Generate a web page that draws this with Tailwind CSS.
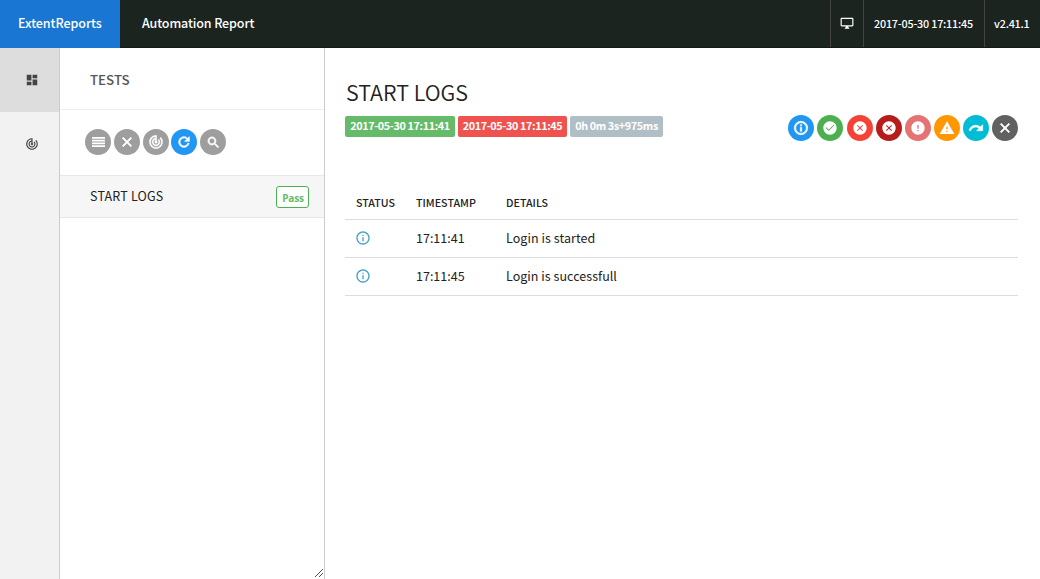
<!DOCTYPE html>
<html lang="en">
<head>
<meta charset="utf-8">
<title>Automation Report</title>
<script src="https://cdn.jsdelivr.net/npm/@tailwindcss/browser@4"></script>
</head>
<body class="h-screen overflow-hidden bg-white text-[#222] font-['Noto_Sans_CJK_SC','Noto_Sans',sans-serif]">
<svg class="hidden">
  <symbol id="track" viewBox="0 0 24 24"><path d="M19.07 4.93l-1.41 1.41C19.1 7.79 20 9.79 20 12c0 4.42-3.58 8-8 8s-8-3.58-8-8c0-4.08 3.05-7.44 7-7.93v2.02C8.16 6.57 6 9.03 6 12c0 3.31 2.69 6 6 6s6-2.69 6-6c0-1.66-.67-3.16-1.76-4.24l-1.41 1.41C15.55 9.9 16 10.9 16 12c0 2.21-1.79 4-4 4s-4-1.79-4-4c0-1.86 1.28-3.41 3-3.86v2.14c-.6.35-1 .98-1 1.72 0 1.1.9 2 2 2s2-.9 2-2c0-.74-.4-1.38-1-1.72V2h-1C6.48 2 2 6.48 2 12s4.48 10 10 10 10-4.48 10-10c0-2.76-1.12-5.26-2.93-7.07z"/></symbol>
  <symbol id="close" viewBox="0 0 24 24"><path d="M19 6.41L17.59 5 12 10.59 6.41 5 5 6.41 10.59 12 5 17.59 6.41 19 12 13.41 17.59 19 19 17.59 13.41 12z"/></symbol>
  <symbol id="info" viewBox="0 0 24 24"><path d="M11 17h2v-6h-2v6zm1-15C6.48 2 2 6.48 2 12s4.48 10 10 10 10-4.48 10-10S17.52 2 12 2zm0 18c-4.41 0-8-3.59-8-8s3.59-8 8-8 8 3.59 8 8-3.59 8-8 8zM11 9h2V7h-2v2z"/></symbol>
  <symbol id="cancel" viewBox="0 0 24 24"><path d="M12 2C6.47 2 2 6.47 2 12s4.47 10 10 10 10-4.47 10-10S17.53 2 12 2zm4.5 13.5l-1 1L12 13l-3.500 3.500-1-1L11 12 7.500 8.500l1-1L12 11l3.500-3.500 1 1L13 12z"/></symbol>
</svg>
<div class="flex h-full flex-col">
  <header class="flex h-12 shrink-0 border-b border-[#151a17] bg-[#1c2420] text-white">
    <div class="-mb-px flex w-[120px] items-center bg-[#1976d2] pb-px pl-[18px] text-[12.5px] font-medium leading-none tracking-[-0.05px]">ExtentReports</div>
    <div class="flex flex-1 items-center pl-[22px] text-[12.5px] font-medium leading-none tracking-[-0.12px]">Automation Report</div>
    <div class="flex w-[33px] items-center justify-center border-l border-[#444] pb-px">
      <svg class="size-[14px] fill-white" viewBox="0 0 24 24"><path d="M21 3H3c-1.1 0-2 .9-2 2v11c0 1.1.9 2 2 2h7v1l-2 2v1h8v-1l-2-2v-1h7c1.1 0 2-.9 2-2V5c0-1.1-.9-2-2-2zm0 13H3V5h18v11z"/></svg>
    </div>
    <div class="flex w-[121px] items-center border-l border-[#444] pb-px pl-[10px] text-[10.8px] font-medium leading-none tracking-[-0.2px]">2017-05-30 17:11:45</div>
    <div class="flex w-[56px] items-center border-l border-[#444] pb-px pl-[9px] text-[10.8px] font-medium leading-none tracking-[-0.2px]">v2.41.1</div>
  </header>
  <div class="flex min-h-0 flex-1">
    <nav class="w-[60px] shrink-0 border-r border-[#ccc] bg-[#f2f2f2]">
      <div class="flex h-16 items-center justify-center bg-[#ddd] pl-[4px] pb-px"><svg class="size-[14px] fill-[#444]" viewBox="0 0 24 24"><path d="M3 13h8V3H3v10zm0 8h8v-6H3v6zm10 0h8V11h-8v10zm0-18v6h8V3h-8z"/></svg></div>
      <div class="flex h-16 items-center justify-center pl-[4px]"><svg class="size-[14px] fill-[#444]"><use href="#track"/></svg></div>
    </nav>
    <aside class="relative w-[265px] shrink-0 border-r border-[#ccc]">
      <div class="flex h-[62px] items-center border-b border-[#eee] pl-[30px] pt-[3px] text-[13.3px] font-medium text-[#555] leading-none">TESTS</div>
      <div class="flex h-[65px] items-center gap-[2.8px] pb-px pl-[25px]">
        <div class="flex size-[26px] items-center justify-center rounded-full bg-[#9e9e9e]"><svg class="h-[10px] w-[13px] fill-white" viewBox="0 0 13 10"><path d="M0 0h13v1.700H0zM0 2.800h13v1.700H0zM0 5.600h13v1.700H0zM0 8.300h13V10H0z"/></svg></div>
        <div class="flex size-[26px] items-center justify-center rounded-full bg-[#9e9e9e]"><svg class="size-[16px] fill-white stroke-white"><use href="#close"/></svg></div>
        <div class="flex size-[26px] items-center justify-center rounded-full bg-[#9e9e9e]"><svg class="size-[16px] fill-white stroke-white stroke-[.5]"><use href="#track"/></svg></div>
        <div class="flex size-[26px] items-center justify-center rounded-full bg-[#2196f3]"><svg class="size-[16px] fill-white stroke-white" viewBox="0 0 24 24"><path d="M17.65 6.35C16.2 4.9 14.21 4 12 4c-4.42 0-7.99 3.58-7.99 8s3.57 8 7.99 8c3.73 0 6.84-2.55 7.73-6h-2.08c-.82 2.33-3.04 4-5.65 4-3.31 0-6-2.69-6-6s2.69-6 6-6c1.66 0 3.14.69 4.22 1.78L13 11h7V4l-2.35 2.35z"/></svg></div>
        <div class="flex size-[26px] items-center justify-center rounded-full bg-[#9e9e9e]"><svg class="size-[15px] fill-white stroke-white" viewBox="0 0 24 24"><path d="M15.5 14h-.79l-.28-.27C15.41 12.59 16 11.11 16 9.5 16 5.91 13.09 3 9.5 3S3 5.91 3 9.5 5.91 16 9.5 16c1.61 0 3.09-.59 4.23-1.57l.27.28v.79l5 4.99L20.49 19l-4.99-5zm-6 0C7.01 14 5 11.99 5 9.5S7.01 5 9.5 5 14 7.01 14 9.5 11.99 14 9.5 14z"/></svg></div>
      </div>
      <div class="flex h-[43px] items-center justify-between border-y border-[#e8e8e8] bg-[#f6f6f6] pl-[30px] pr-[15px]">
        <span class="text-[12.5px] leading-none tracking-[0.2px]">START LOGS</span>
        <span class="flex h-[22px] w-[33px] items-center justify-center rounded-[3px] border border-[#4caf50] bg-white pl-px pt-[2px] font-['Open_Sans',sans-serif] text-[10px] font-bold leading-none text-[#66bb6a] tracking-[-0.2px]">Pass</span>
      </div>
      <svg class="absolute bottom-[2px] right-[1px] size-[8px] stroke-[#555]" viewBox="0 0 8 8"><path d="M0 8L8 0M4 8L8 4"/></svg>
    </aside>
    <main class="flex-1 pl-5 pr-[22px]">
      <h1 class="mt-[29px] h-[30px] pl-px text-[21.5px] font-[350] leading-[30px]">START LOGS</h1>
      <div class="mt-[8px] flex h-[26px] justify-between">
        <div class="mt-px flex h-[21px] gap-[3px] text-[10.8px] font-bold leading-[19px] tracking-[-0.37px] text-white">
          <span class="w-[110px] rounded-[2px] bg-[#66bb6a] text-center">2017-05-30 17:11:41</span>
          <span class="w-[109px] rounded-[2px] bg-[#ef5350] text-center">2017-05-30 17:11:45</span>
          <span class="w-[93px] rounded-[2px] bg-[#b0bec5] text-center">0h 0m 3s+975ms</span>
        </div>
        <div class="flex gap-[3.1px]">
          <div class="flex size-[26px] items-center justify-center rounded-full bg-[#2196f3]"><svg class="size-[16px] fill-white stroke-white"><use href="#info"/></svg></div>
          <div class="flex size-[26px] items-center justify-center rounded-full bg-[#4caf50]"><svg class="size-[16px] fill-white" viewBox="0 0 24 24"><path d="M12 2C6.48 2 2 6.48 2 12s4.48 10 10 10 10-4.48 10-10S17.52 2 12 2zm-2 14.500l-4.500-4.500 1-1L10 14.500l7.500-7.500 1 1z"/></svg></div>
          <div class="flex size-[26px] items-center justify-center rounded-full bg-[#f44336]"><svg class="size-[16px] fill-white"><use href="#cancel"/></svg></div>
          <div class="flex size-[26px] items-center justify-center rounded-full bg-[#b71c1c]"><svg class="size-[16px] fill-white"><use href="#cancel"/></svg></div>
          <div class="flex size-[26px] items-center justify-center rounded-full bg-[#e57373]"><svg class="size-[16px] fill-white" viewBox="0 0 24 24"><path d="M12 2C6.48 2 2 6.48 2 12s4.48 10 10 10 10-4.48 10-10S17.52 2 12 2zm1 15h-2v-2h2v2zm0-4h-2V7h2v6z"/></svg></div>
          <div class="flex size-[26px] items-center justify-center rounded-full bg-[#ff9800]"><svg class="size-[16px] fill-white" viewBox="0 0 24 24"><path d="M1 21h22L12 2 1 21zm12-3h-2v-2h2v2zm0-4h-2v-4h2v4z"/></svg></div>
          <div class="flex size-[26px] items-center justify-center rounded-full bg-[#00bcd4]"><svg class="size-[16px] fill-white stroke-white" viewBox="0 0 24 24"><path d="M18.4 10.6C16.55 8.99 14.15 8 11.5 8c-4.65 0-8.58 3.03-9.96 7.22L3.9 16c1.05-3.19 4.05-5.5 7.6-5.5 1.95 0 3.73.72 5.12 1.88L13 16h9V7l-3.6 3.6z"/></svg></div>
          <div class="flex size-[26px] items-center justify-center rounded-full bg-[#616161]"><svg class="size-[16px] fill-white stroke-white"><use href="#close"/></svg></div>
        </div>
      </div>
      <div class="mt-[46px] grid grid-cols-[71px_90px_1fr] leading-none">
        <div class="col-span-3 grid h-[33px] grid-cols-subgrid items-center border-b border-[#ddd] text-[10.7px] font-medium"><span class="pl-[11px]">STATUS</span><span>TIMESTAMP</span><span>DETAILS</span></div>
        <div class="col-span-3 grid h-[38px] grid-cols-subgrid items-center border-b border-[#ddd] text-[12.5px]"><svg class="mb-px ml-[10px] size-[16px] fill-[#46a0cb]"><use href="#info"/></svg><span>17:11:41</span><span class="tracking-[0.07px]">Login is started</span></div>
        <div class="col-span-3 grid h-[38px] grid-cols-subgrid items-center border-b border-[#ddd] text-[12.5px]"><svg class="mb-px ml-[10px] size-[16px] fill-[#46a0cb]"><use href="#info"/></svg><span>17:11:45</span><span class="tracking-[0.04px]">Login is successfull</span></div>
      </div>
    </main>
  </div>
</div>
</body>
</html>
